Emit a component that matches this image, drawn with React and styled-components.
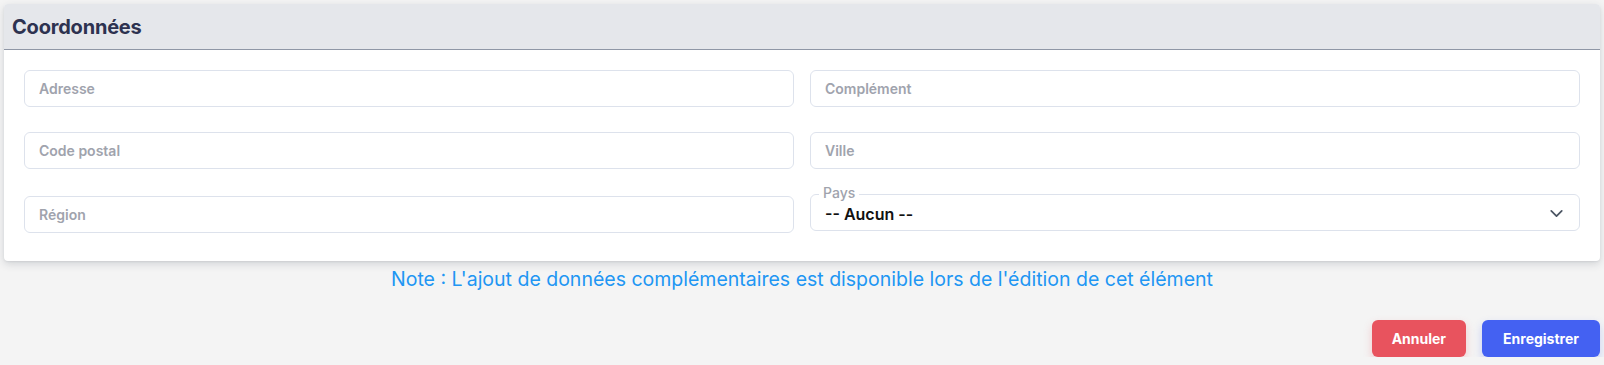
import React from "react";
import styled, { createGlobalStyle } from "styled-components";
import { ChevronDown } from "lucide-react";

const Global = createGlobalStyle`
  html, body { margin: 0; padding: 0; background: #f4f4f4; }
  body { font-family: Inter, "Noto Sans", Arial, sans-serif; }
  * { box-sizing: border-box; }
`;

const Page = styled.div`
  width: 1604px;
  padding: 4px 4px 0 4px;
  display: flex;
  flex-direction: column;
`;

const Card = styled.section`
  background: #fff;
  border-radius: 4px;
  box-shadow: 0 3px 8px rgba(40, 50, 70, 0.16), 0 1px 2px rgba(40, 50, 70, 0.08);
  overflow: hidden;
`;

const Header = styled.header`
  height: 46px;
  background: #e5e7eb;
  border-bottom: 1px solid #8f97a6;
  display: flex;
  align-items: center;
  padding: 0 8px;
`;

const Title = styled.h2`
  margin: 0;
  font-size: 20px;
  font-weight: 700;
  color: #2d3250;
  letter-spacing: -0.2px;
`;

const Body = styled.div`
  display: grid;
  grid-template-columns: 1fr 1fr;
  column-gap: 16px;
  row-gap: 25px;
  padding: 20px 20px 28px 20px;
`;

const Input = styled.input`
  height: 37px;
  width: 100%;
  margin-top: ${(p) => p.$offset || 0}px;
  border: 1px solid #dde2ec;
  border-radius: 6px;
  padding: 0 14px;
  font-family: Inter, "Noto Sans", Arial, sans-serif;
  font-size: 14px;
  font-weight: 600;
  color: #333;
  outline: none;
  background: #fff;
  &::placeholder { color: #a0a3ad; }
`;

const SelectBox = styled.div`
  position: relative;
  height: 37px;
  border: 1px solid #dde2ec;
  border-radius: 6px;
  display: flex;
  align-items: center;
  justify-content: space-between;
  padding: 2px 12px 0 14px;
`;

const FloatLabel = styled.span`
  position: absolute;
  top: -10px;
  left: 8px;
  padding: 0 4px;
  background: #fff;
  font-size: 14px;
  font-weight: 500;
  color: #a0a3ad;
  line-height: 16px;
`;

const SelectValue = styled.span`
  font-size: 16px;
  font-weight: 600;
  color: #111;
`;

const Note = styled.p`
  margin: 6px 0 0;
  text-align: center;
  font-size: 19.5px;
  line-height: 24px;
  color: #2196f3;
`;

const Actions = styled.div`
  display: flex;
  justify-content: flex-end;
  gap: 16px;
  margin-top: 29px;
`;

const Button = styled.button`
  height: 37px;
  padding: 0 ${(p) => p.$px}px;
  border: none;
  border-radius: 6px;
  background: ${(p) => p.$bg};
  color: #fff;
  font-family: Inter, "Noto Sans", Arial, sans-serif;
  font-size: 14px;
  font-weight: 700;
  box-shadow: 0 4px 8px ${(p) => p.$shadow};
  cursor: pointer;
`;

export default function App() {
  return (
    <>
      <Global />
      <Page>
        <Card>
          <Header>
            <Title>Coordonnées</Title>
          </Header>
          <Body>
            <Input placeholder="Adresse" />
            <Input placeholder="Complément" />
            <Input placeholder="Code postal" />
            <Input placeholder="Ville" />
            <Input placeholder="Région" $offset={2} />
            <SelectBox>
              <FloatLabel>Pays</FloatLabel>
              <SelectValue>-- Aucun --</SelectValue>
              <ChevronDown size={21} strokeWidth={2} color="#4b5563" />
            </SelectBox>
          </Body>
        </Card>
        <Note>
          Note : L'ajout de données complémentaires est disponible lors de l'édition de cet élément
        </Note>
        <Actions>
          <Button $bg="#e8535e" $px={20} $shadow="rgba(232, 83, 94, 0.25)">Annuler</Button>
          <Button $bg="#4461f2" $px={21} $shadow="rgba(68, 97, 242, 0.25)">Enregistrer</Button>
        </Actions>
      </Page>
    </>
  );
}
